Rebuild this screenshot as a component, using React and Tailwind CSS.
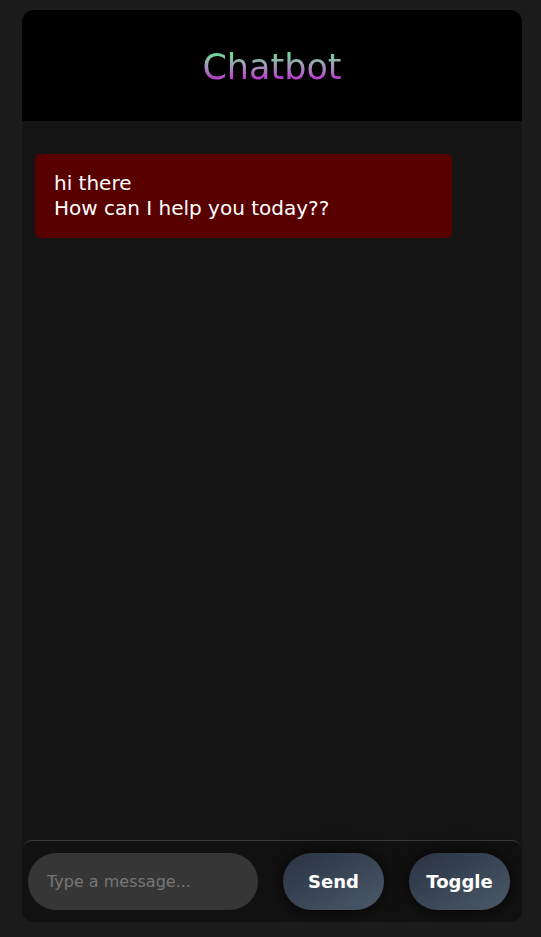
export default function App() {
  const font = { fontFamily: '"DejaVu Sans", "Open Sans", sans-serif' };
  return (
    <div className="min-h-[937px] w-full bg-[#1b1b1b] pt-[10px] px-[22px]" style={font}>
      <div className="w-[500px] h-[912px] rounded-[12px] overflow-hidden flex flex-col bg-[#141414]">
        <div className="h-[111px] bg-black flex items-center justify-center shrink-0">
          <h1 className="text-[35px] leading-none bg-gradient-to-b from-[#6fd39a] from-[20%] to-[#b643cc] to-[80%] bg-clip-text text-transparent pt-[3px]">
            Chatbot
          </h1>
        </div>
        <div className="flex-1 px-[13px] pt-[33px]">
          <div className="w-[417px] bg-[#580000] rounded-[5px] px-[19px] py-[17px] text-white text-[20px] leading-[25px]">
            <div>hi there</div>
            <div>How can I help you today??</div>
          </div>
        </div>
        <div className="h-[82px] shrink-0 bg-[#111111] border-t border-[#3a3a3a] rounded-[10px] flex items-center px-[6px] gap-[25px]">
          <input
            placeholder="Type a message..."
            className="w-[230px] h-[57px] rounded-full bg-[#363636] px-[19px] text-[16px] text-white placeholder:text-[#777777] outline-none"
            style={font}
          />
          <button className="w-[101px] h-[57px] rounded-full bg-gradient-to-br from-[#2a3342] to-[#4b5968] text-white font-bold text-[18px] shadow-[0_0_18px_rgba(0,0,0,0.8)]">
            Send
          </button>
          <button className="w-[101px] h-[57px] rounded-full bg-gradient-to-br from-[#2a3342] to-[#4b5968] text-white font-bold text-[18px] shadow-[0_0_18px_rgba(0,0,0,0.8)]">
            Toggle
          </button>
        </div>
      </div>
    </div>
  );
}
